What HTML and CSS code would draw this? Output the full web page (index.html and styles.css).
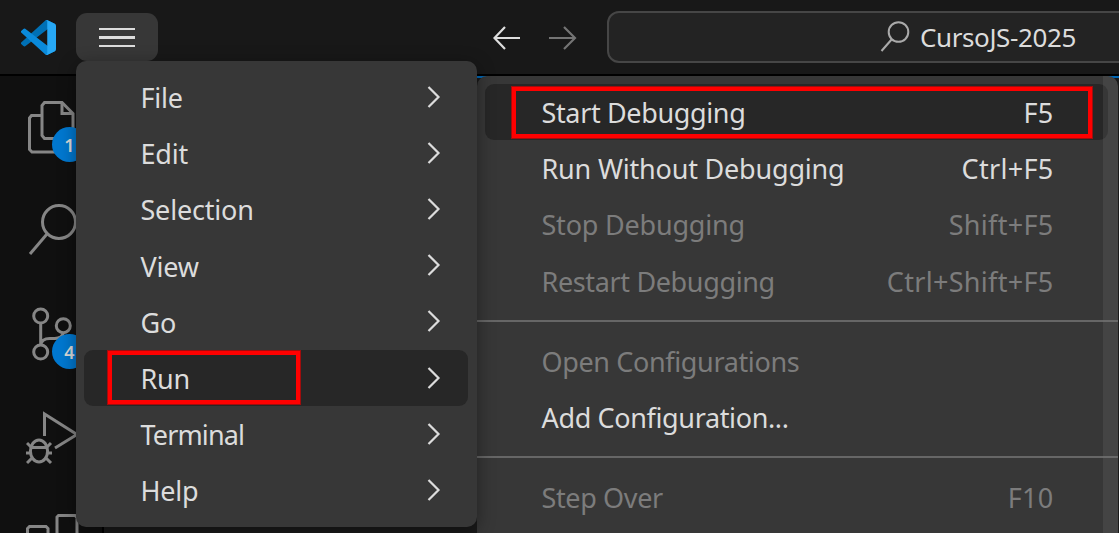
FILE: index.html
```html
<!DOCTYPE html>
<html lang="en">
<head>
<meta charset="utf-8">
<title>CursoJS-2025</title>
<link rel="stylesheet" href="styles.css">
</head>
<body>
<div class="window">
  <header class="titlebar">
    <svg class="logo" viewBox="0 0 100 100">
      <path fill="#0070B5" d="M96.5 10.6 75.9.7a6.2 6.2 0 0 0-7.1 1.2L1.3 63.400a4.200 4.200 0 0 0 0 6.200l5.500 5a4.200 4.200 0 0 0 5.300.2L93.400 13.200c2.700-2 6.600-.1 6.600 3.300z"/>
      <path fill="#0A8ADB" d="m96.500 89.400-20.600 9.900a6.200 6.200 0 0 1-7.100-1.200L1.300 36.600a4.200 4.200 0 0 1 0-6.200l5.500-5a4.200 4.200 0 0 1 5.300-.2l81.300 61.600c2.700 2 6.600.1 6.600-3.300z"/>
      <path fill="#27A8F5" d="M75.900 99.300a6.200 6.200 0 0 1-7.100-1.200c2.300 2.300 6.200.7 6.200-2.600V4.500c0-3.300-3.900-4.900-6.200-2.600A6.200 6.200 0 0 1 75.900.7l20.600 9.900a6.200 6.200 0 0 1 3.500 5.600v67.600a6.200 6.200 0 0 1-3.500 5.600z"/>
    </svg>
    <div class="hamburger"><i></i><i></i><i></i></div>
    <div class="history">
      <svg width="28" height="24" viewBox="0 0 28 24"><path d="M27 12H2M12 1 1.500 12 12 23"/></svg>
      <svg class="dim" width="28" height="24" viewBox="0 0 28 24"><path d="M0 12h26M15 1l11 11-11 11"/></svg>
    </div>
    <div class="command">
      <svg width="30" height="32" viewBox="0 0 30 32"><circle cx="18.500" cy="11" r="9.800"/><path d="M12 18 1.500 30"/></svg>
      <span>CursoJS-2025</span>
    </div>
  </header>
  <div class="workbench">
    <nav class="activity">
      <div class="tool files">
        <svg width="54" height="56" viewBox="26 99 54 56"><path d="M42 115.500H31.500L29.500 118v31.500l2.500 2.500h27l3-3v-11M44.500 102.500H62l11 11V136l-2.500 2.500h-26l-2.500-3v-30z"/><path d="M62 103v10.500h11"/></svg>
        <b class="badge">1</b>
      </div>
      <div class="tool search">
        <svg width="54" height="56" viewBox="26 202 54 56"><circle cx="59" cy="222" r="16.500"/><path d="M47 234 30 254"/></svg>
      </div>
      <div class="tool scm">
        <svg width="54" height="60" viewBox="26 306 54 60"><circle cx="40.700" cy="316" r="7"/><circle cx="63.300" cy="325.700" r="7"/><circle cx="40.700" cy="352" r="7"/><path d="M40.700 323v22M40.700 345q1-6.500 9-6.500h5q8 0 8.600-6"/></svg>
        <b class="badge">4</b>
      </div>
      <div class="tool debug">
        <svg width="54" height="56" viewBox="26 411 54 56"><path d="M44.500 436v-22L77 434.500 55 448"/><ellipse cx="39" cy="451" rx="8.600" ry="11"/><path d="M31 447.500h16M31 447l-4-4M47 447l4-4M30 453h-4M48 453h4M32 458l-5 5M46 458l5 5"/></svg>
      </div>
      <div class="tool ext">
        <svg width="54" height="24" viewBox="26 513 54 24"><path d="M27.500 537v-8.500l2-2H46l2 2v8.500M57 537v-20l1.500-1.500H75l2 2V537"/></svg>
      </div>
    </nav>
    <main class="editor"></main>
  </div>

  <div class="menu main-menu">
    <div class="item"><span class="label">File</span><svg class="chev" viewBox="0 0 14 24"><path d="m1.500 2 10 10-10 10"/></svg></div>
    <div class="item"><span class="label">Edit</span><svg class="chev" viewBox="0 0 14 24"><path d="m1.500 2 10 10-10 10"/></svg></div>
    <div class="item"><span class="label">Selection</span><svg class="chev" viewBox="0 0 14 24"><path d="m1.500 2 10 10-10 10"/></svg></div>
    <div class="item"><span class="label">View</span><svg class="chev" viewBox="0 0 14 24"><path d="m1.500 2 10 10-10 10"/></svg></div>
    <div class="item"><span class="label">Go</span><svg class="chev" viewBox="0 0 14 24"><path d="m1.500 2 10 10-10 10"/></svg></div>
    <div class="item active"><span class="label">Run</span><svg class="chev" viewBox="0 0 14 24"><path d="m1.500 2 10 10-10 10"/></svg></div>
    <div class="item"><span class="label tight">Terminal</span><svg class="chev" viewBox="0 0 14 24"><path d="m1.500 2 10 10-10 10"/></svg></div>
    <div class="item"><span class="label">Help</span><svg class="chev" viewBox="0 0 14 24"><path d="m1.500 2 10 10-10 10"/></svg></div>
    <div class="mark mark-run"></div>
  </div>

  <div class="menu sub-menu">
    <div class="item active"><span class="label">Start Debugging</span><span class="key">F5</span></div>
    <div class="item"><span class="label wide">Run Without Debugging</span><span class="key">Ctrl+F5</span></div>
    <div class="item off"><span class="label wide">Stop Debugging</span><span class="key">Shift+F5</span></div>
    <div class="item off"><span class="label">Restart Debugging</span><span class="key">Ctrl+Shift+F5</span></div>
    <hr>
    <div class="item off"><span class="label">Open Configurations</span></div>
    <div class="item"><span class="label">Add Configuration...</span></div>
    <hr>
    <div class="item off"><span class="label">Step Over</span><span class="key">F10</span></div>
    <div class="scrollbar"></div>
    <div class="mark mark-start"></div>
  </div>
</div>
</body>
</html>
```
FILE: styles.css
```css
* { box-sizing: border-box; }
body { margin: 0; background: #181818; }
svg { display: block; flex: none; fill: none; }
.window {
  position: relative;
  width: 1119px;
  height: 533px;
  overflow: hidden;
  display: flex;
  flex-direction: column;
  font-family: "Noto Sans", "Open Sans", sans-serif;
  font-size: 27px;
  color: #dcdcdc;
}

/* Title bar */
.titlebar {
  height: 76px;
  flex: none;
  display: flex;
  align-items: flex-start;
  background: #181818;
  border-bottom: 2px solid #000;
}
.logo { width: 35px; height: 35px; margin: 20px 20px 0 21px; }
.hamburger {
  width: 82px;
  height: 48px;
  flex: none;
  margin-top: 13px;
  padding-top: 1px;
  border-radius: 11px;
  background: #373737;
  display: flex;
  flex-direction: column;
  align-items: center;
  justify-content: center;
  gap: 6.500px;
}
.hamburger i { width: 36px; height: 2.300px; background: #dcdcdc; }
.history { display: flex; flex: none; gap: 28px; margin: 26px 0 0 334.500px; }
.history svg { stroke: #dedede; stroke-width: 2.200; }
.history .dim { stroke: #747474; }
.command {
  width: 560px;
  height: 52px;
  flex: none;
  margin: 11px 0 0 30.500px;
  padding-left: 271px;
  border: 2px solid #464646;
  border-radius: 12px;
  background: #232323;
  display: flex;
  align-items: center;
  gap: 10px;
  font-size: 26px;
  letter-spacing: -.4px;
}
.command svg { stroke: #aaa; stroke-width: 2; }

/* Workbench */
.workbench { flex: 1; display: flex; }
.activity { width: 104px; padding: 23px 0 0 26px; background: #101010; border-right: 2px solid #000; }
.editor { flex: 1; background: #1a1a1a; border-top: 2px solid #0067b5; }
.tool { position: relative; height: 104px; }
.tool svg { stroke: #868686; stroke-width: 3; }
.files { height: 103px; }
.scm { height: 105px; }
.debug { height: 102px; }
.badge {
  position: absolute;
  left: 26px;
  top: 28px;
  width: 35px;
  height: 35px;
  border-radius: 50%;
  background: #0078d0;
  color: #dcdcdc;
  font-size: 18px;
  font-weight: 600;
  line-height: 36px;
  text-align: center;
}

/* Menus */
.menu {
  position: absolute;
  background: #373737;
  border-radius: 10px;
  box-shadow: 0 4px 18px rgba(0, 0, 0, .4);
}
.main-menu { left: 76px; top: 61px; width: 401px; height: 466px; padding: 8px 9px 0 8px; z-index: 2; }
.sub-menu { left: 477px; top: 76px; width: 641px; height: 480px; padding-top: 8px; box-shadow: none; border-radius: 10px 10px 0 0; }
.item {
  height: 56.200px;
  padding: 0 27.500px 0 56px;
  border-radius: 9px;
  display: flex;
  align-items: center;
  justify-content: space-between;
  line-height: 56px;
  white-space: nowrap;
}
.sub-menu .item { margin: 0 10px 0 8px; padding-right: 54.500px; }
.item.active { background: #272727; }
.item.off { color: #7c7c7c; }
.label, .key { position: relative; top: 1px; }
.label { letter-spacing: -.36px; left: .5px; }
.label.wide { letter-spacing: -.2px; }
.main-menu .label { letter-spacing: -.2px; }
.main-menu .label.tight { letter-spacing: -.85px; }
.key { letter-spacing: .3px; }
.chev { width: 14px; height: 24px; stroke: #dcdcdc; stroke-width: 2.200; }
.main-menu .chev { margin-top: -1px; }
.sub-menu hr { height: 2px; margin: 11px 0; border: 0; background: #666; }
.scrollbar { position: absolute; top: 0; right: 0; width: 15px; height: 100%; background: rgba(121, 121, 121, .2); border-radius: 0 10px 0 0; }
.mark { position: absolute; border: 5px solid #f00; outline: 1px solid #a00d0d; outline-offset: -1px; }
.mark-run { left: 31px; top: 289px; width: 194px; height: 55px; }
.mark-start { left: 34px; top: 10px; width: 582px; height: 53px; }
```
